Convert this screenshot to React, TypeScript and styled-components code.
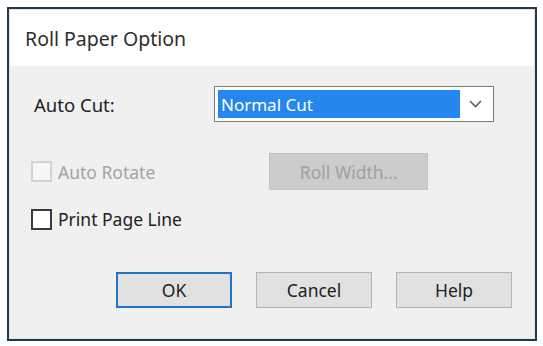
import * as React from 'react';
import styled, { createGlobalStyle } from 'styled-components';

const GlobalStyle = createGlobalStyle`
  html, body {
    margin: 0;
    padding: 0;
    background: #ffffff;
  }
  body {
    font-family: "Noto Sans", "Open Sans", sans-serif;
  }
`;

const Page = styled.div`
  width: 543px;
  height: 346px;
  padding: 7px 6px 5px 7px;
  box-sizing: border-box;
`;

const Window = styled.div`
  height: 100%;
  border: 2px solid #24384c;
  box-shadow: inset 0 0 0 1px #d8e6f2;
  box-sizing: border-box;
  display: flex;
  flex-direction: column;
  background: #f0f0f0;
`;

const TitleBar = styled.div`
  height: 56px;
  background: #ffffff;
  display: flex;
  align-items: center;
  padding-left: 15px;
  font-size: 19.5px;
  color: #2e2e2e;
  margin: 1px 1px 0 1px;
`;

const Body = styled.div`
  flex: 1;
  display: flex;
  flex-direction: column;
  padding: 20px 23px 0 22px;
`;

const Row = styled.div<{ $top?: number; $height: number }>`
  display: flex;
  align-items: center;
  height: ${(p) => p.$height}px;
  margin-top: ${(p) => p.$top ?? 0}px;
`;

const Label = styled.div`
  width: 183px;
  padding-left: 3px;
  box-sizing: border-box;
  font-size: 18.5px;
  color: #222222;
`;

const Select = styled.div`
  width: 280px;
  height: 36px;
  box-sizing: border-box;
  border: 1px solid #7a7a7a;
  background: #ffffff;
  display: flex;
  align-items: center;
  padding: 3px;
`;

const Selected = styled.div`
  flex: 0 0 242px;
  height: 100%;
  background: #2587ee;
  color: #ffffff;
  font-size: 17px;
  display: flex;
  align-items: center;
  padding-left: 3px;
  box-sizing: border-box;
`;

const Arrow = styled.div`
  flex: 1;
  display: flex;
  justify-content: center;
  align-items: center;
`;

const CheckItem = styled.label<{ $disabled?: boolean }>`
  display: flex;
  align-items: center;
  gap: 6px;
  font-size: 17.5px;
  color: ${(p) => (p.$disabled ? '#a3a3a3' : '#222222')};
`;

const Box = styled.span<{ $disabled?: boolean }>`
  width: 21px;
  height: 21px;
  box-sizing: border-box;
  border: 2px solid ${(p) => (p.$disabled ? '#d2d2d2' : '#3a3a3a')};
  background: ${(p) => (p.$disabled ? '#f6f6f6' : '#ffffff')};
`;

const Spacer = styled.div<{ $width: number }>`
  width: ${(p) => p.$width}px;
`;

const GrayButton = styled.div`
  width: 159px;
  height: 37px;
  box-sizing: border-box;
  border: 1px solid #c2c2c2;
  background: #cccccc;
  color: #a0a0a0;
  font-size: 17.5px;
  display: flex;
  align-items: center;
  justify-content: center;
`;

const ButtonRow = styled.div`
  display: flex;
  justify-content: flex-end;
  gap: 24px;
  margin-top: 41px;
`;

const Button = styled.div<{ $primary?: boolean }>`
  width: 116px;
  height: 36px;
  box-sizing: border-box;
  border: ${(p) => (p.$primary ? '2px solid #1b74c8' : '1px solid #b4b4b4')};
  background: #e1e1e1;
  color: #222222;
  font-size: 17.5px;
  display: flex;
  align-items: center;
  justify-content: center;
`;

export default function App() {
  return (
    <>
      <GlobalStyle />
      <Page>
        <Window>
          <TitleBar>Roll Paper Option</TitleBar>
          <Body>
            <Row $height={36}>
              <Label>Auto Cut:</Label>
              <Select>
                <Selected>Normal Cut</Selected>
                <Arrow>
                  <svg width="13" height="8" viewBox="0 0 13 8">
                    <path d="M1 1 L6.5 6.5 L12 1" fill="none" stroke="#606060" strokeWidth="1.6" />
                  </svg>
                </Arrow>
              </Select>
            </Row>
            <Row $top={31} $height={37}>
              <CheckItem $disabled>
                <Box $disabled />
                Auto Rotate
              </CheckItem>
              <Spacer $width={114} />
              <GrayButton>Roll Width...</GrayButton>
            </Row>
            <Row $top={17} $height={24}>
              <CheckItem>
                <Box />
                Print Page Line
              </CheckItem>
            </Row>
            <ButtonRow>
              <Button $primary>OK</Button>
              <Button>Cancel</Button>
              <Button>Help</Button>
            </ButtonRow>
          </Body>
        </Window>
      </Page>
    </>
  );
}
